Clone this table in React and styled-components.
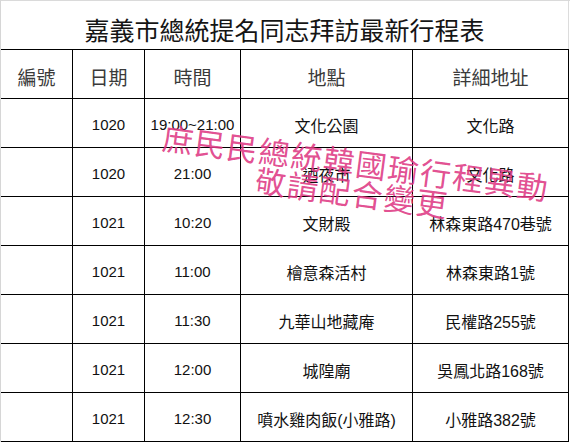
import styled, { createGlobalStyle } from "styled-components";

const GlobalStyle = createGlobalStyle`
  html, body {
    margin: 0;
    padding: 0;
    background: #fff;
  }
  body {
    font-family: "Liberation Sans", "Noto Sans CJK TC", sans-serif;
  }
`;

const columns = ["編號", "日期", "時間", "地點", "詳細地址"];

const rows = [
  { no: "", date: "1020", time: "19:00~21:00", place: "文化公園", addr: "文化路" },
  { no: "", date: "1020", time: "21:00", place: "迺夜市", addr: "文化路" },
  { no: "", date: "1021", time: "10:20", place: "文財殿", addr: "林森東路470巷號" },
  { no: "", date: "1021", time: "11:00", place: "檜意森活村", addr: "林森東路1號" },
  { no: "", date: "1021", time: "11:30", place: "九華山地藏庵", addr: "民權路255號" },
  { no: "", date: "1021", time: "12:00", place: "城隍廟", addr: "吳鳳北路168號" },
  { no: "", date: "1021", time: "12:30", place: "噴水雞肉飯(小雅路)", addr: "小雅路382號" },
];

const App = () => {
  return (
    <>
      <GlobalStyle />
      <Sheet>
        <Title>嘉義市總統提名同志拜訪最新行程表</Title>
        <Grid>
          {columns.map(name => (
            <HeadCell key={name}>{name}</HeadCell>
          ))}
          {rows.map((r, i) => (
            <Row key={i}>
              <Cell>{r.no}</Cell>
              <Cell $digits>{r.date}</Cell>
              <Cell $digits $nowrap>{r.time}</Cell>
              <Cell>{r.place}</Cell>
              <Cell>{r.addr}</Cell>
            </Row>
          ))}
        </Grid>
        {/* 粉紅色的異動印記，壓在表格上 */}
        <Stamp>
          <StampLine>庶民民總統韓國瑜行程異動</StampLine>
          <StampLine>敬請配合變更</StampLine>
        </Stamp>
      </Sheet>
    </>
  );
};
export default App;

const Sheet = styled.div`
  position: relative;
  width: 570px;
  height: 442px;
  overflow: hidden;
  box-sizing: border-box;
  border-top: 1px solid #dadada;
  border-left: 1px solid #d6d6d6;
  background: #fff;
`;

const Title = styled.div`
  box-sizing: border-box;
  width: 568px;
  height: 48px;
  border-right: 1px solid #dcdcdc;
  display: flex;
  align-items: center;
  justify-content: center;
  padding-top: 8px;
  font-family: "Noto Sans CJK TC", sans-serif;
  font-size: 25px;
  color: #151515;
`;

const Grid = styled.div`
  display: grid;
  grid-template-columns: 72px 72px 96px 172px 156px;
  grid-auto-rows: 49px;
  border-top: 1px solid #000;
  width: 568px;
`;

const Row = styled.div`
  display: contents;
`;

const Cell = styled.div`
  box-sizing: border-box;
  display: flex;
  align-items: center;
  justify-content: center;
  padding-top: 3px;
  border-right: 1px solid #000;
  border-bottom: 1px solid #000;
  font-size: ${p => (p.$digits ? "15px" : "16px")};
  color: #111;
  white-space: ${p => (p.$nowrap ? "nowrap" : "normal")};
`;

const HeadCell = styled(Cell)`
  font-family: "Noto Sans CJK TC", sans-serif;
  font-size: 19px;
  color: #3a3a3a;
  padding-top: 4px;
`;

const Stamp = styled.div`
  position: absolute;
  left: 140px;
  top: 146px;
  width: 426px;
  transform: rotate(7.5deg);
  text-align: center;
  pointer-events: none;
`;

const StampLine = styled.div`
  font-family: "Noto Sans CJK TC", sans-serif;
  font-size: 31px;
  line-height: 30px;
  letter-spacing: 1.5px;
  font-weight: 400;
  color: rgba(222, 58, 132, 0.9);
`;
